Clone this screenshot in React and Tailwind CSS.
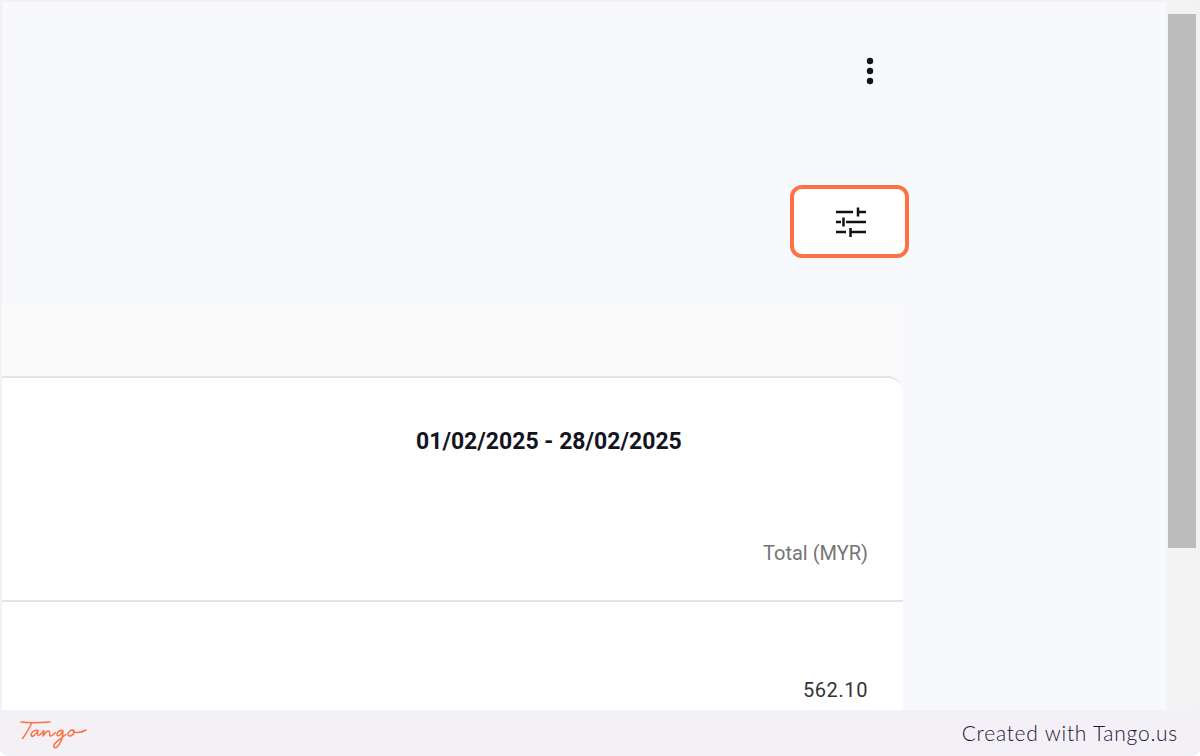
import React from 'react';

const TuneIcon = () => (
  <svg width="32" height="32" viewBox="0 0 32 32" fill="none" stroke="#111" strokeWidth="2.500">
    <path d="M0 7h17M22 11.500V2.500M22 7H30" />
    <path d="M0 17h5M7.500 21.500V12.500M10 17H30" />
    <path d="M0 27h10M14.500 32V23M14.500 27H30" />
  </svg>
);

const KebabIcon = () => (
  <svg width="8" height="28" viewBox="0 0 8 28" fill="#14141f">
    <circle cx="4" cy="4" r="3.200" />
    <circle cx="4" cy="14" r="3.200" />
    <circle cx="4" cy="24" r="3.200" />
  </svg>
);

const TangoLogo = () => (
  <svg width="70" height="32" viewBox="0 -1.500 70 32" fill="none" stroke="#ff7043" strokeWidth="1.500" strokeLinecap="round" strokeLinejoin="round" aria-label="Tango">
    <path d="M1 3.500C8 4.500 20 4.200 30 3.500" />
    <path d="M12 4C9 10 6.500 15 2.500 20" />
    <path d="M18 12C14 10.500 10 15 11.500 17.500C13 19 16 15.500 18 12C17.500 14 17 16.500 18.500 17C20.500 17 22 14 24 12C24 14 23 16 23 17.500C25 14.500 27 12 29 12.500C30.500 13 28.500 17 30.500 17.500C32 17.500 34 15.500 35.500 14" />
    <path d="M43 12.500C40 10.500 36.500 14 37 16.500C38 18.500 41 16.500 43 12.500C43 18 41 24 37.500 28C35 30.500 32.500 29 34.500 25.500C36.500 22.500 41 20 46 16" />
    <path d="M54 12C50.500 10.500 47.500 14 48 16.500C49 18.500 53 17.500 54 14C54.500 12.500 53.500 11.500 52.500 12C53.500 14.500 60 15 66 11.500" />
  </svg>
);

export default function App() {
  return (
    <div className="w-[1200px] h-[756px] flex flex-col overflow-hidden rounded-b-lg bg-[#f3f1f6] font-['Roboto',sans-serif]">
      <div className="h-[710px] flex pl-[2px] pr-[2px] pt-[2px] overflow-hidden">
        <main className="flex-1 min-w-0 bg-[#f8f9fd] overflow-hidden">
          <div className="w-[901px]">
            {/* Barra superior */}
            <div className="h-[183px] flex justify-end pt-[55px] pr-[29px]">
              <KebabIcon />
            </div>

            {/* Boton de filtros */}
            <div className="h-[121px] flex justify-end -mr-[6px]">
              <button className="w-[119px] h-[73px] flex items-center justify-center pl-[4px] pb-[1px] bg-white border-4 border-[#ff7043] rounded-[12px]">
                <TuneIcon />
              </button>
            </div>

            {/* Contenido */}
            <div className="bg-[#fafafa] pt-[70px]">
              <div className="bg-white border-t-2 border-[#e3e3e3] rounded-tr-[16px]">
                <div className="h-[222px] flex flex-col">
                  <div className="pt-[50px] pl-[414px] text-[23px] leading-[28px] font-bold text-[#14141f]">
                    01/02/2025 - 28/02/2025
                  </div>
                  <div className="mt-[85px] pr-[35px] text-right text-[20px] leading-[24px] text-[#757575]">
                    Total (MYR)
                  </div>
                </div>
                <div className="border-t-2 border-[#e3e3e3] h-[120px] pt-[76px] pr-[35px] text-right text-[20px] tracking-[0.6px] leading-[24px] text-[#333]">
                  562.10
                </div>
              </div>
            </div>
          </div>
        </main>

        {/* Scrollbar */}
        <div className="w-[32px] shrink-0 bg-[#f3f3f3] pt-[12px] px-[2px]">
          <div className="h-[534px] bg-[#bcbcbc]" />
        </div>
      </div>

      {/* Pie de Tango */}
      <footer className="h-[46px] shrink-0 flex items-center justify-between pl-[20px] pr-[22px]">
        <TangoLogo />
        <span className="font-['Lato',sans-serif] font-light text-[21px] tracking-[0.75px] text-[#231438]">Created with Tango.us</span>
      </footer>
    </div>
  );
}
